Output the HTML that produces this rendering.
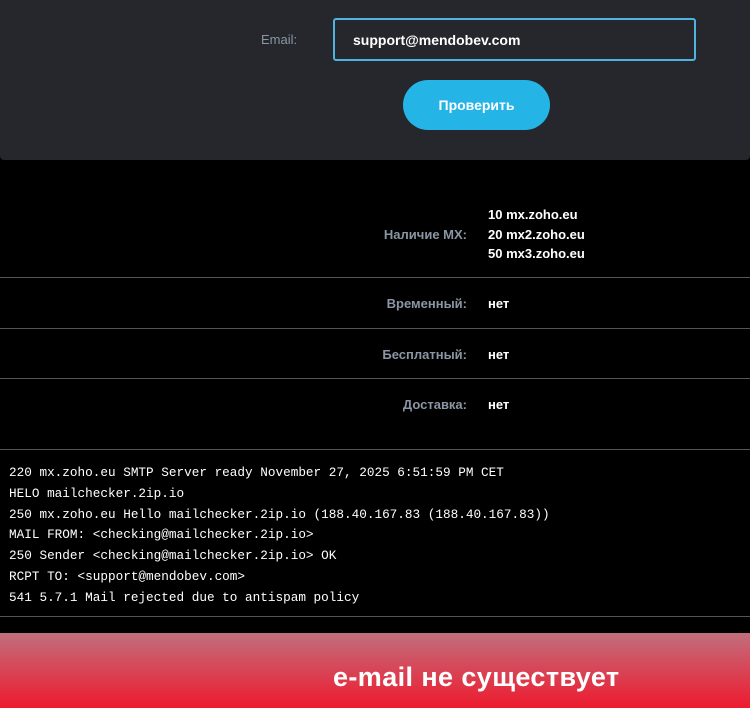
<!DOCTYPE html>
<html><head><meta charset="utf-8"><style>
*{margin:0;padding:0;box-sizing:border-box}
body{width:750px;height:708px;background:#000;font-family:"Liberation Sans",sans-serif;position:relative;overflow:hidden}
.top{position:absolute;left:0;top:0;width:750px;height:160px;background:#25272c;border-radius:0 0 4px 4px}
.lbl{position:absolute;left:261px;top:32px;color:#8a96a3;font-size:13px}
.inp{position:absolute;left:333px;top:18px;width:363px;height:43px;border:2px solid #4fb3e0;border-radius:3px;color:#fff;font-size:14px;font-weight:bold;padding:12px 0 0 18px}
.btn{position:absolute;left:403px;top:80px;width:147px;height:50px;border-radius:25px;background:#25b4e6;color:#fff;font-weight:bold;font-size:14px;text-align:center;line-height:50px}
.row{position:absolute;left:0;width:750px;border-bottom:1px solid #555}
.k{position:absolute;right:283px;color:#8a96a3;font-size:13px;font-weight:bold}
.v{position:absolute;left:488px;color:#fff;font-size:13px;font-weight:bold}
.log{position:absolute;left:9px;top:463px;color:#fff;font-family:"Liberation Mono",monospace;font-size:12.7px;line-height:20.8px;white-space:pre}
.red{position:absolute;left:0;top:633px;width:750px;height:75px;background:linear-gradient(#c16f7d,#ee1a2e);color:#fff;font-size:27px;font-weight:bold;padding-top:29px;padding-left:333px;letter-spacing:0.4px}
</style></head><body>
<div class="top"></div>
<div class="lbl">Email:</div>
<div class="inp">support@mendobev.com</div>
<div class="btn">Проверить</div>
<div class="k" style="top:227px">Наличие MX:</div>
<div class="v" style="top:205px;line-height:19.5px">10 mx.zoho.eu<br>20 mx2.zoho.eu<br>50 mx3.zoho.eu</div>
<div class="row" style="top:277px;height:1px"></div>
<div class="k" style="top:296px">Временный:</div><div class="v" style="top:296px">нет</div>
<div class="row" style="top:328px;height:1px"></div>
<div class="k" style="top:347px">Бесплатный:</div><div class="v" style="top:347px">нет</div>
<div class="row" style="top:378px;height:1px"></div>
<div class="k" style="top:397px">Доставка:</div><div class="v" style="top:397px">нет</div>
<div class="row" style="top:449px;height:1px"></div>
<div class="log">220 mx.zoho.eu SMTP Server ready November 27, 2025 6:51:59 PM CET
HELO mailchecker.2ip.io
250 mx.zoho.eu Hello mailchecker.2ip.io (188.40.167.83 (188.40.167.83))
MAIL FROM: &lt;checking@mailchecker.2ip.io&gt;
250 Sender &lt;checking@mailchecker.2ip.io&gt; OK
RCPT TO: &lt;support@mendobev.com&gt;
541 5.7.1 Mail rejected due to antispam policy</div>
<div class="row" style="top:616px;height:1px"></div>
<div class="red">e-mail не существует</div>
</body></html>
